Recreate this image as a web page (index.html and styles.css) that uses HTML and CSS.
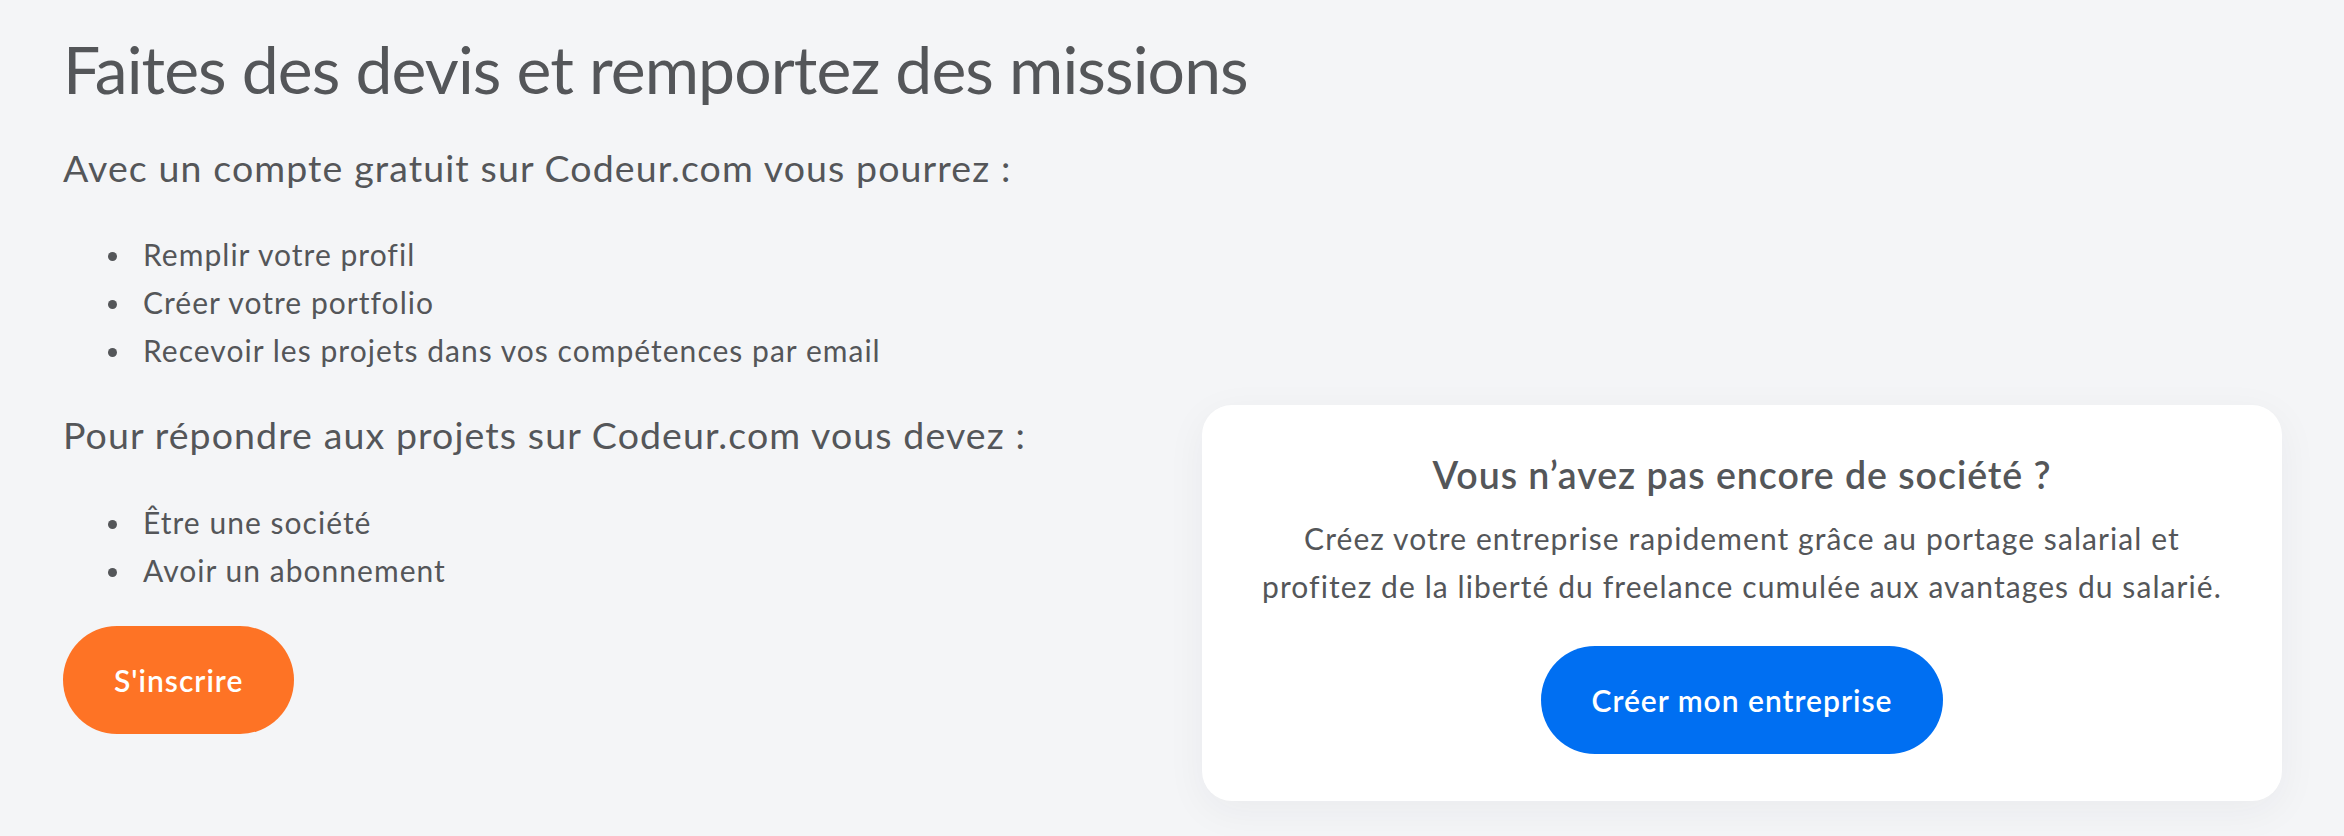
FILE: index.html
```html
<!DOCTYPE html>
<html lang="fr">
<head>
<meta charset="utf-8">
<title>Faites des devis et remportez des missions</title>
<link rel="stylesheet" href="styles.css">
</head>
<body>
<section class="section">
  <h1 class="title">Faites des devis et remportez des missions</h1>
  <div class="intro">
    <p class="lead">Avec un compte gratuit sur Codeur.com vous pourrez :</p>
    <ul class="list">
      <li>Remplir votre profil</li>
      <li>Créer votre portfolio</li>
      <li>Recevoir les projets dans vos compétences par email</li>
    </ul>
    <p class="lead">Pour répondre aux projets sur Codeur.com vous devez :</p>
    <ul class="list">
      <li>Être une société</li>
      <li>Avoir un abonnement</li>
    </ul>
    <a class="btn btn-orange" href="#">S'inscrire</a>
  </div>
  <aside class="card">
    <h2 class="card-title">Vous n’avez pas encore de société ?</h2>
    <p class="card-text">Créez votre entreprise rapidement grâce au portage salarial et<br>profitez de la liberté du freelance cumulée aux avantages du salarié.</p>
    <a class="btn btn-blue" href="#">Créer mon entreprise</a>
  </aside>
</section>
</body>
</html>
```
FILE: styles.css
```css
* { box-sizing: border-box; }

html, body {
  margin: 0;
  background: #f4f5f7;
}

body {
  font-family: "Lato", "Noto Sans", sans-serif;
  color: #545659;
  min-height: 836px;
}

.section {
  display: grid;
  grid-template-columns: 1fr 1fr;
  column-gap: 59px;
  padding: 29px 62px 32px 63px;
}

.title {
  grid-column: 1 / -1;
  margin: 0;
  font-size: 66px;
  line-height: 1.2;
  font-weight: 400;
  letter-spacing: -0.9px;
  white-space: nowrap;
}

.intro {
  display: flex;
  flex-direction: column;
  align-items: flex-start;
  padding-bottom: 67px;
}

.lead {
  margin: 33px 0 0;
  font-size: 37.5px;
  line-height: 1.5;
  letter-spacing: 1.1px;
}

.intro > .lead:first-child { margin-top: 32px; }

.list {
  list-style: none;
  margin: 34px 0 0;
  padding: 0 0 0 45px;
  font-size: 30px;
  line-height: 48px;
  letter-spacing: 1.03px;
}

.list li::before {
  content: "";
  display: inline-block;
  width: 9px;
  height: 9px;
  border-radius: 50%;
  background: currentColor;
  margin-right: 26px;
  vertical-align: 5px;
}

.btn {
  display: inline-block;
  padding: 30px 51px;
  border-radius: 54px;
  color: #fff;
  font-size: 30px;
  line-height: 48px;
  font-weight: 600;
  letter-spacing: 1px;
  text-decoration: none;
  white-space: nowrap;
}

.btn-orange {
  margin-top: 32px;
  background: #fe7325;
}

.btn-blue {
  margin-top: 36px;
  background: #006ff2;
}

.card {
  align-self: end;
  display: flex;
  flex-direction: column;
  align-items: center;
  text-align: center;
  background: #fff;
  border-radius: 30px;
  padding: 42px 40px 47px;
  box-shadow: 0 10px 40px rgba(30, 40, 60, 0.05);
}

.card-title {
  margin: 0;
  font-size: 37.5px;
  line-height: 1.5;
  font-weight: 600;
  letter-spacing: 0.95px;
}

.card-text {
  margin: 10px 0 0;
  font-size: 30px;
  line-height: 48px;
  letter-spacing: 1.08px;
}
```
